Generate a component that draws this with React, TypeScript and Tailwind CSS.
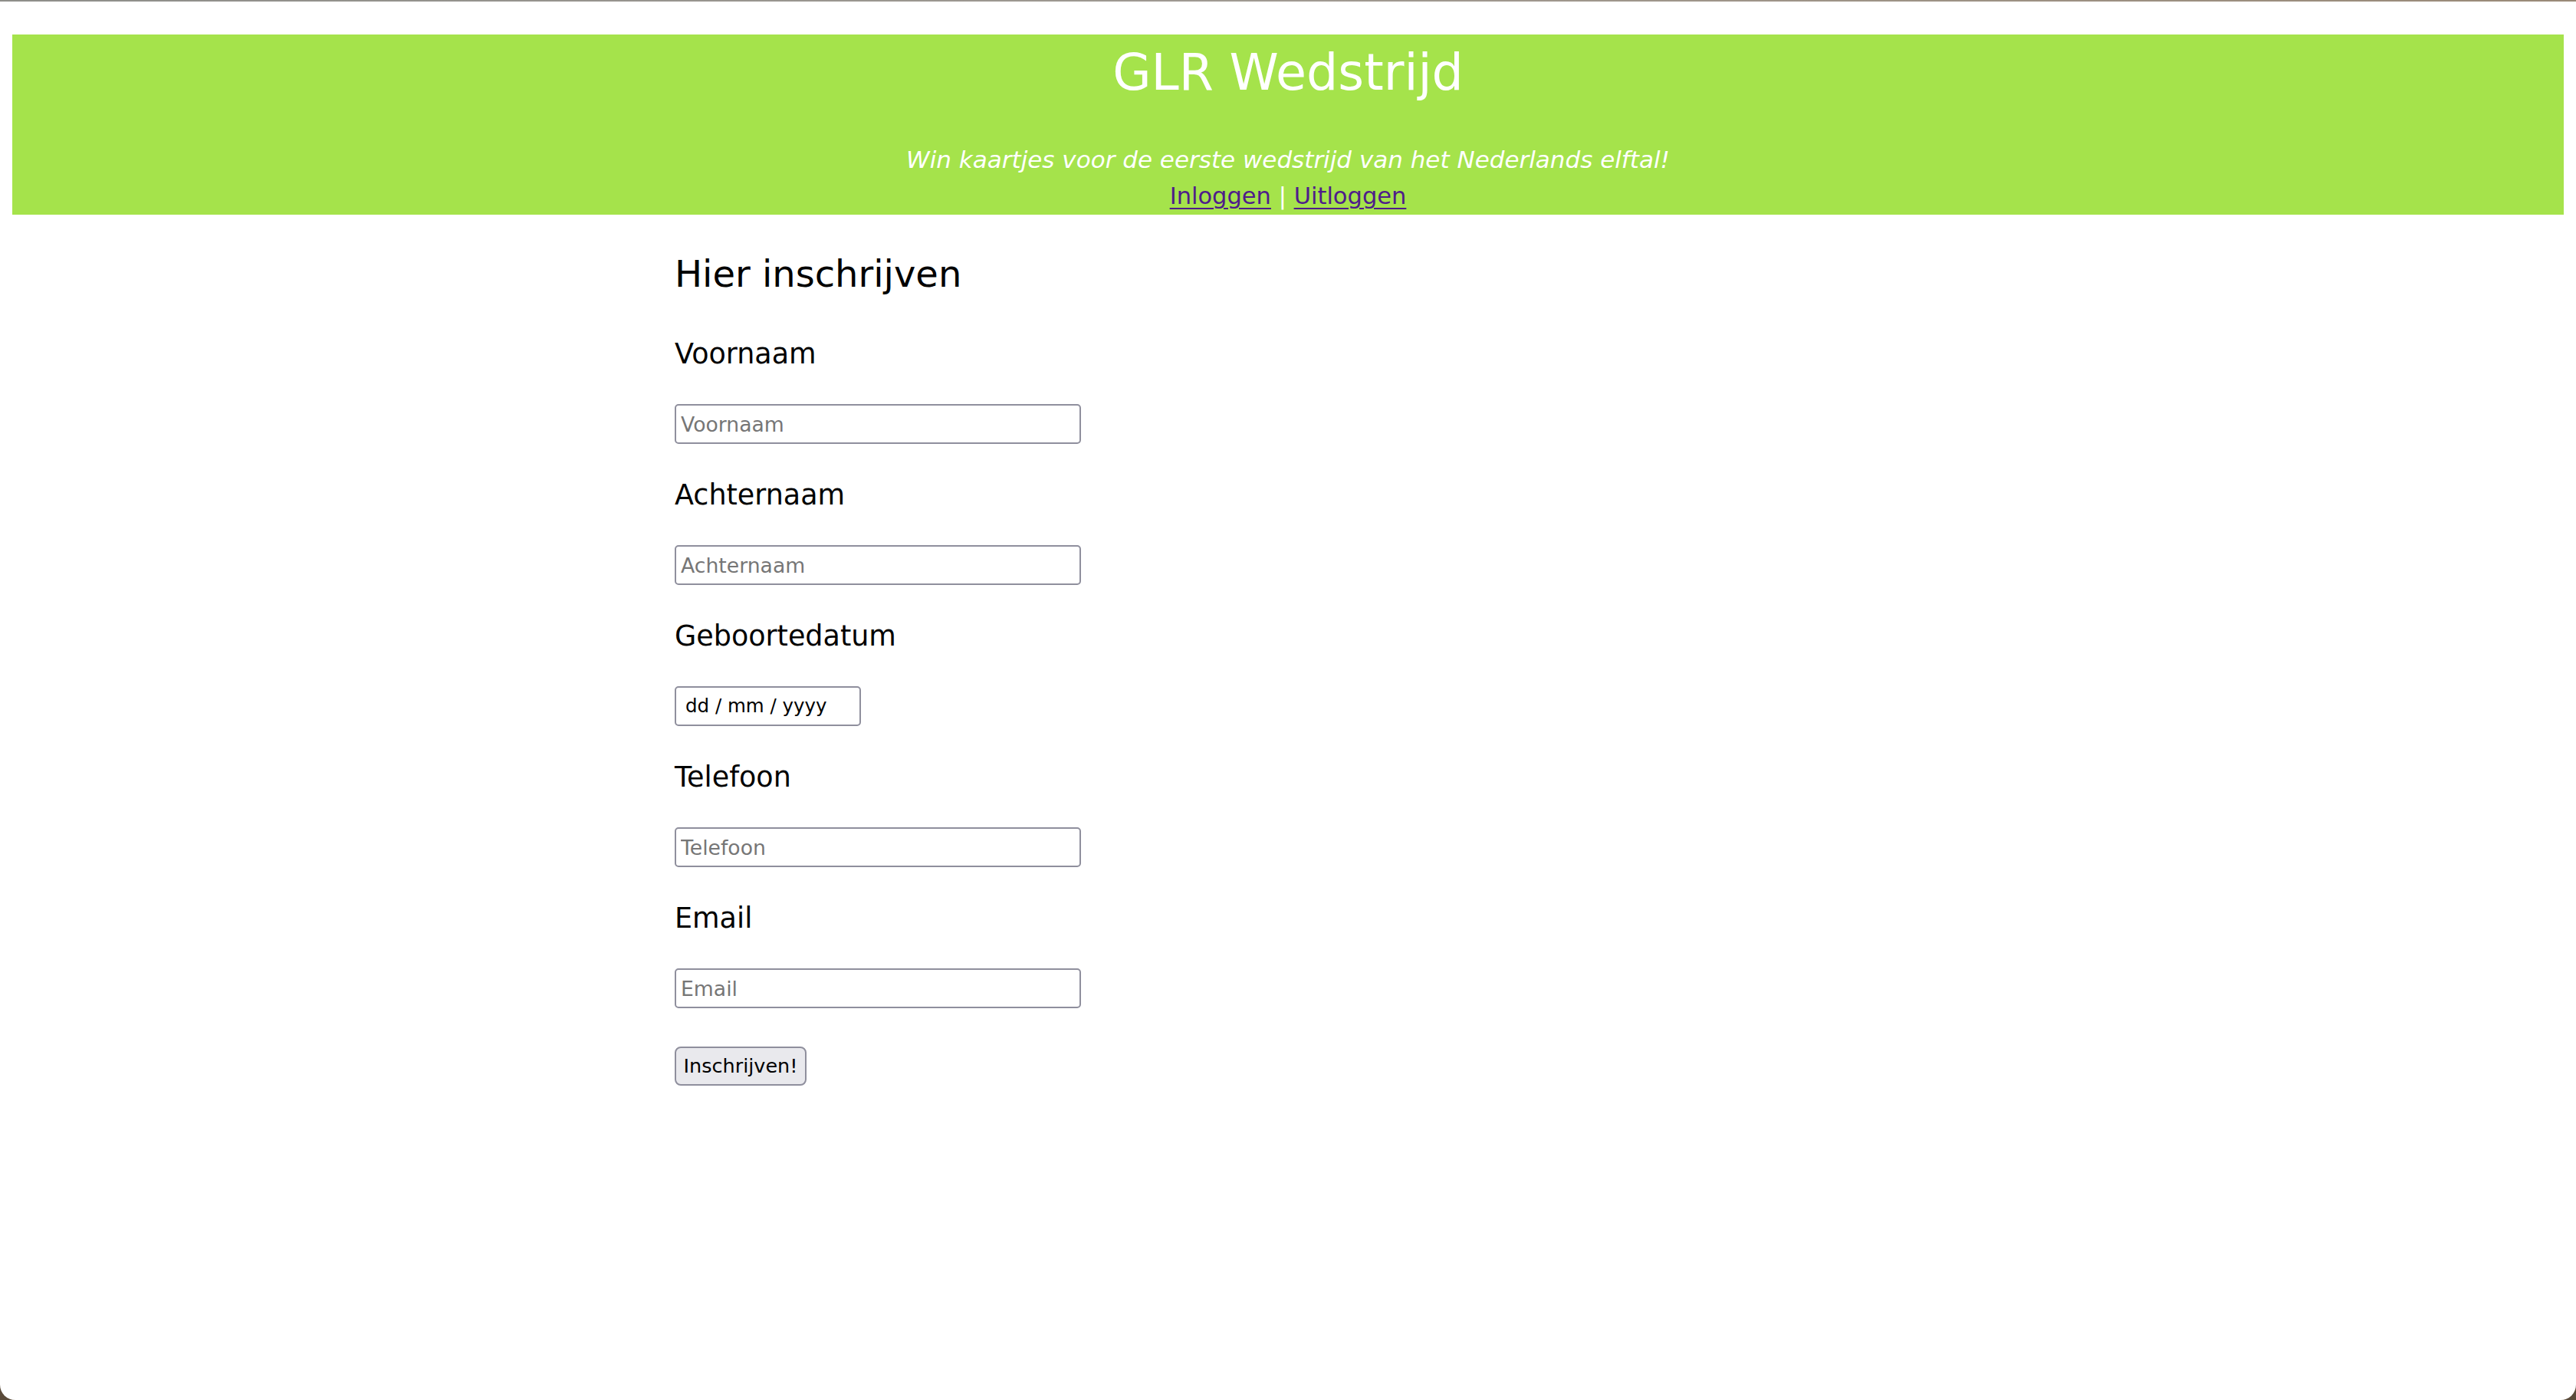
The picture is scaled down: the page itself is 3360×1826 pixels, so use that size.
import React from "react";

const fields = [
  { label: "Voornaam", placeholder: "Voornaam" },
  { label: "Achternaam", placeholder: "Achternaam" },
  { label: "Geboortedatum", date: true },
  { label: "Telefoon", placeholder: "Telefoon" },
  { label: "Email", placeholder: "Email" },
];

export default function App() {
  return (
    <div
      className="flex h-[1826px] w-full flex-col bg-[#5a4b3a]"
      style={{ fontFamily: '"DejaVu Sans", Verdana, sans-serif' }}
    >
      <div className="h-[2px] w-full bg-gradient-to-r from-[#8e8e8a] via-[#a09a92] to-[#9a8a78]" />
      <div className="flex flex-1 flex-col overflow-hidden rounded-b-[20px] bg-white">
        <header className="mx-[16px] mt-[43px] bg-[#a5e34b] text-center text-white">
          <h1 className="h-[96px] pt-[2px] text-[65px] font-normal leading-[96px]">GLR Wedstrijd</h1>
          <div className="mt-[43px] leading-[48px]">
            <p className="text-[31px] italic">Win kaartjes voor de eerste wedstrijd van het Nederlands elftal!</p>
            <p className="text-[30.5px]">
              <a href="#" className="text-[#4f1c8a] underline decoration-2 underline-offset-[5px]">
                Inloggen
              </a>{" "}
              |{" "}
              <a href="#" className="text-[#4f1c8a] underline decoration-2 underline-offset-[5px]">
                Uitloggen
              </a>
            </p>
          </div>
        </header>

        <main className="mx-auto w-[1600px] text-black">
          <h2 className="mt-[41px] text-[48px] font-normal leading-[72px]">Hier inschrijven</h2>
          {fields.map((f, i) => (
            <div key={f.label} className={i === 0 ? "mt-[41px] flex flex-col items-start" : "mt-[39px] flex flex-col items-start"}>
              <h3 className="text-[36.5px] font-normal leading-[56px]">{f.label}</h3>
              {f.date ? (
                <div className="mt-[37px] flex h-[52px] w-[243px] items-center rounded-[5px] border-2 border-[#8f8f9d] bg-white pl-[12px] text-[24.5px] text-black">
                  dd / mm / yyyy
                </div>
              ) : (
                <input
                  type="text"
                  placeholder={f.placeholder}
                  className="mt-[37px] h-[52px] w-[530px] rounded-[5px] border-2 border-[#8f8f9d] bg-white px-[6px] text-[26.67px] text-black outline-none placeholder:text-[#767676]"
                  style={{ fontFamily: '"DejaVu Sans", Verdana, sans-serif' }}
                />
              )}
            </div>
          ))}
          <button
            type="button"
            className="mt-[50px] flex h-[51px] w-[172px] items-center justify-center rounded-[8px] border-2 border-[#8f8f9d] bg-[#e9e9ed] text-[25.5px] text-black"
            style={{ fontFamily: '"DejaVu Sans", Verdana, sans-serif' }}
          >
            Inschrijven!
          </button>
        </main>
      </div>
    </div>
  );
}
